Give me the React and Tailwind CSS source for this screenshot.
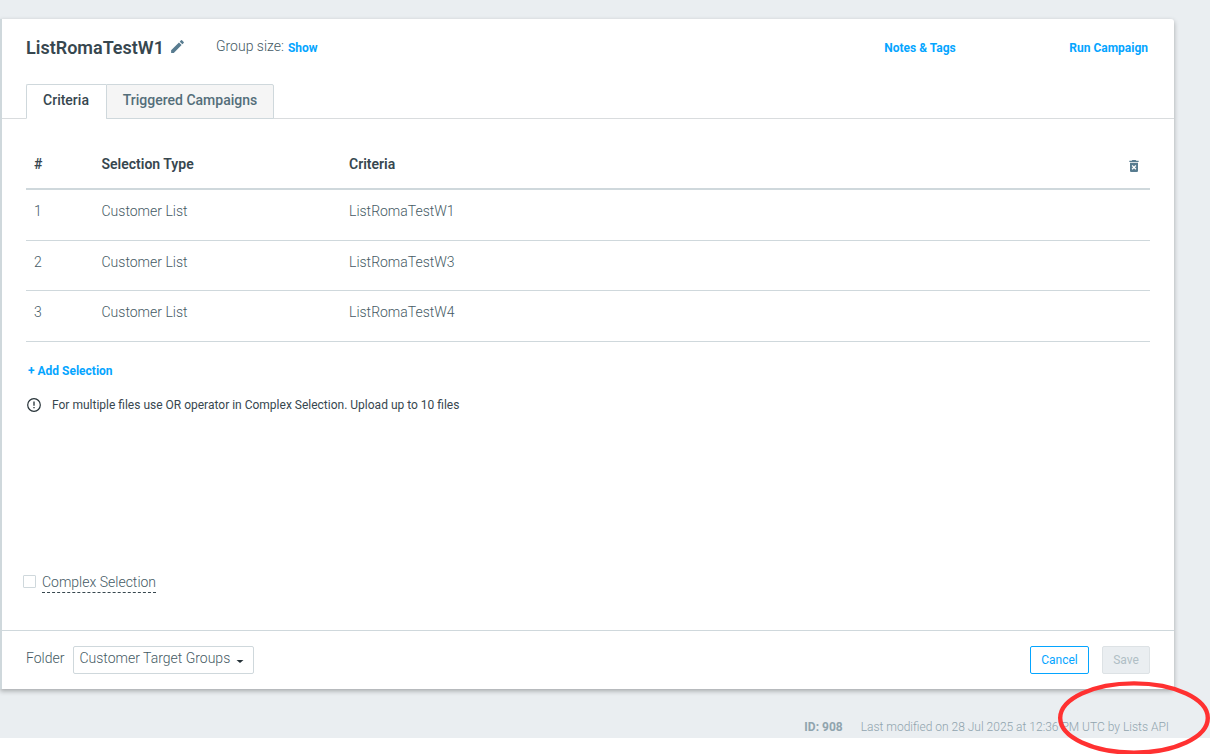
import { useState } from 'react';
import { MdModeEdit, MdDeleteForever } from 'react-icons/md';

const selections = [
  { id: 1, type: 'Customer List', criteria: 'ListRomaTestW1', height: 'h-[51px]' },
  { id: 2, type: 'Customer List', criteria: 'ListRomaTestW3', height: 'h-[50px]' },
  { id: 3, type: 'Customer List', criteria: 'ListRomaTestW4', height: 'h-[51px]' },
];

function LinkButton({ children, className = '' }) {
  return (
    <button className={`text-xs leading-4 font-bold text-[#05a5ff] whitespace-nowrap ${className}`}>
      {children}
    </button>
  );
}

function Header() {
  return (
    <div className="flex items-start h-[65px] pl-6 pr-[26px]">
      <h1 className="mt-[17px] text-lg leading-6 font-semibold text-[#37474f]">ListRomaTestW1</h1>
      <MdModeEdit className="mt-[19px] ml-[5px] w-[17px] h-[17px] text-[#587c90]" />
      <span className="mt-[17px] ml-[30px] text-sm leading-5 font-light">Group size:</span>
      <LinkButton className="mt-[21px] ml-1">Show</LinkButton>
      <LinkButton className="mt-[21px] ml-auto">Notes &amp; Tags</LinkButton>
      <LinkButton className="mt-[21px] ml-[113.5px]">Run Campaign</LinkButton>
    </div>
  );
}

function Tabs() {
  const [tab, setTab] = useState('criteria');
  const base = 'h-[35px] border border-[#cfd8dc] text-sm leading-5 font-medium pb-[3px]';
  const active = 'bg-white border-b-white text-[#37474f]';
  const idle = 'bg-[#f5f5f5] text-[#546e7a]';

  return (
    <div className="flex h-[35px] pl-6 shadow-[inset_0_-1px_0_#d9dcde]">
      <button
        onClick={() => setTab('criteria')}
        className={`w-[80px] pr-px border-r-0 rounded-tl-[2px] ${base} ${tab === 'criteria' ? active : idle}`}
      >
        Criteria
      </button>
      <button
        onClick={() => setTab('campaigns')}
        className={`w-[168px] rounded-tr-[2px] ${base} ${tab === 'campaigns' ? active : idle}`}
      >
        Triggered Campaigns
      </button>
    </div>
  );
}

function SelectionTable() {
  return (
    <div className="mx-6 text-sm leading-5">
      <div className="flex h-[71px] pt-[35px] pl-2 border-b-2 border-[#cfd8dc] font-semibold text-[#37474f]">
        <div className="w-[67.5px]">#</div>
        <div className="w-[247.5px]">Selection Type</div>
        <div className="flex-1">Criteria</div>
        <MdDeleteForever className="mt-1 mr-2 w-4 h-4 text-[#587c90]" />
      </div>
      {selections.map(s => (
        <div key={s.id} className={`flex pt-[11px] pl-2 border-b border-[#cfd8dc] font-light ${s.height}`}>
          <div className="w-[67.5px]">{s.id}</div>
          <div className="w-[247.5px]">{s.type}</div>
          <div className="flex-1">{s.criteria}</div>
        </div>
      ))}
    </div>
  );
}

function InfoNote() {
  return (
    <div className="flex items-center mt-[18px] ml-[25px] text-xs leading-4 text-[#37474f]">
      <svg viewBox="0 0 14 14" className="w-[14px] h-[14px] mr-[11px]" fill="none" stroke="#263238">
        <circle cx="7" cy="7" r="6.3" strokeWidth="1.2" />
        <path d="M7 3.5v4.2M7 8.9v1.4" strokeWidth="1.3" />
      </svg>
      For multiple files use OR operator in Complex Selection. Upload up to 10 files
    </div>
  );
}

function Footer() {
  return (
    <div className="flex items-start h-[59px] mt-auto pl-6 pr-6 border-t border-[#cfd8dc]">
      <span className="mt-[17px] text-sm leading-5 font-light">Folder</span>
      <button className="flex items-start mt-[15px] ml-[9px] w-[181px] h-7 pl-[5px] pt-px border border-[#cfd8dc] rounded-[2px] text-sm leading-5 font-light">
        <span>Customer Target Groups</span>
        <svg viewBox="0 0 8 3" className="w-2 h-[3px] mt-[12px] ml-[6px]" fill="#263238">
          <path d="M0.5 0h7L4 3z" />
        </svg>
      </button>
      <button className="mt-[15px] ml-auto w-[59px] h-7 border border-[#05a5ff] rounded-[2px] text-xs text-[#05a5ff]">
        Cancel
      </button>
      <button className="mt-[15px] ml-[13px] w-12 h-7 border border-[#dde2e5] rounded-[2px] bg-[#eaeef1] text-xs text-[#b0bec5]">
        Save
      </button>
    </div>
  );
}

export default function App() {
  return (
    <div className="relative w-[1210px] h-[754px] overflow-hidden bg-white font-[Roboto,sans-serif] text-[#455a64]">
      <div className="h-[738px] pt-[19px] bg-[#eaeef1]">
        <div className="flex flex-col w-[1174px] h-[670px] bg-white border-l-2 border-[#cfd8dc] rounded-r-[3px] shadow-[0_2px_5px_rgba(0,0,0,0.3)]">
          <Header />
          <Tabs />
          <SelectionTable />
          <LinkButton className="self-start mt-[21px] ml-[26px]">+ Add Selection</LinkButton>
          <InfoNote />
          <label className="flex items-start mt-[159px] ml-[21px] text-sm leading-5 font-light">
            <span className="w-[13px] h-[13px] mt-[3px] mr-[6px] border border-[#cfd8dc] rounded-[1px]" />
            <span className="h-[21px] border-b border-dashed border-[#37474f]">Complex Selection</span>
          </label>
          <Footer />
        </div>
        <div className="flex justify-end gap-[18px] mt-[30px] pr-[41px] text-xs leading-4 text-[#90a4ae]">
          <span className="font-bold">ID: 908</span>
          <span className="font-light">Last modified on 28 Jul 2025 at 12:36 PM UTC by Lists API</span>
        </div>
      </div>

      {/* Red marker around the author */}
      <svg className="absolute right-0 bottom-0 w-[154px] h-[76px]" viewBox="0 0 154 76" fill="none">
        <ellipse cx="78" cy="40" rx="73.8" ry="34.6" stroke="#ff3131" strokeWidth="4.4" />
      </svg>
    </div>
  );
}
